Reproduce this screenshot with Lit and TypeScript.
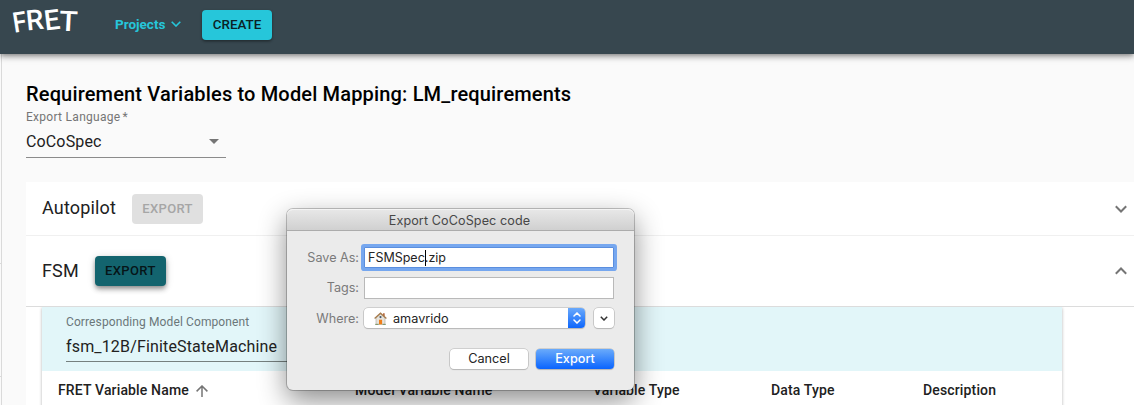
import { LitElement, html, css, svg } from "lit";
import { customElement, property } from "lit/decorators.js";

const COLUMNS = ["FRET Variable Name", "Model Variable Name", "Variable Type", "Data Type", "Description"];

const chevron = (d: string) => svg`<path d=${d} fill="none" stroke="currentColor" />`;

@customElement("app-header")
class AppHeader extends LitElement {
  static styles = css`
    :host {
      display: flex;
      align-items: flex-start;
      height: 54px;
      background: #37474f;
      box-shadow: 0 2px 4px -1px rgba(0, 0, 0, 0.3), 0 4px 5px rgba(0, 0, 0, 0.16), 0 1px 10px rgba(0, 0, 0, 0.14);
      z-index: 1;
      font-family: Roboto, sans-serif;
    }
    .logo {
      display: flex;
      width: 102px;
      padding-left: 12px;
      box-sizing: border-box;
      color: #fff;
      font: 500 28px/42px Roboto, sans-serif;
    }
    .logo span { display: block; width: 17px; }
    .logo span:nth-child(1) { transform: translateY(2px) rotate(-9deg) scaleX(0.9); width: 13.5px; }
    .logo span:nth-child(2) { transform: translateY(-0.5px) rotate(-6deg); width: 18px; }
    .logo span:nth-child(3) { transform: translateY(-0.5px) rotate(-7deg); width: 16.5px; }
    .logo span:nth-child(4) { transform: translateY(1px) rotate(3deg) scaleX(1.08); }
    .projects {
      display: flex;
      align-items: center;
      gap: 6px;
      width: 87px;
      height: 48px;
      padding-left: 13px;
      box-sizing: border-box;
      color: #26c6da;
      font-size: 13.5px;
      font-weight: 700;
    }
    .create {
      margin-top: 10px;
      width: 70px;
      height: 30px;
      border-radius: 4px;
      background: #26c6da;
      box-shadow: 0 1px 3px rgba(0, 0, 0, 0.3), 0 2px 2px rgba(0, 0, 0, 0.14);
      color: #0b2226;
      font-size: 13.4px;
      font-weight: 500;
      line-height: 29px;
      text-align: center;
    }
    .gap { width: 13px; }
  `;
  render() {
    return html`
      <div class="logo"><span>F</span><span>R</span><span>E</span><span>T</span></div>
      <div class="projects">
        <span>Projects</span>
        <svg width="10" height="6" viewBox="0 0 10 6" stroke-width="1.6">${chevron("M.7 .7 5 5 9.3 .7")}</svg>
      </div>
      <div class="gap"></div>
      <div class="create">CREATE</div>
    `;
  }
}

@customElement("component-panel")
class ComponentPanel extends LitElement {
  @property() name = "";
  @property({ type: Boolean }) open = false;
  static styles = css`
    :host { display: block; background: #fff; font-family: Roboto, sans-serif; }
    .bar {
      display: flex;
      align-items: center;
      height: 53px;
      padding: 0 7px 0 16px;
      border-bottom: 1px solid #f0f0f0;
      color: #212121;
    }
    .bar.open { height: 70px; border-color: #dcdcdc; }
    .name { padding-bottom: 2px; font-size: 18px; letter-spacing: 0.17px; }
    .export {
      width: 71px;
      height: 30px;
      margin-left: 16px;
      border-radius: 4px;
      background: #e0e0e0;
      color: #a6a6a6;
      font-size: 13px;
      font-weight: 500;
      letter-spacing: 0.35px;
      line-height: 29px;
      text-align: center;
    }
    .open .export {
      background: #13646e;
      color: #061518;
      box-shadow: 0 2px 4px -1px rgba(0, 0, 0, 0.3), 0 4px 5px rgba(0, 0, 0, 0.2), 0 1px 8px rgba(0, 0, 0, 0.14);
    }
    svg { margin-left: auto; color: #757575; }
  `;
  render() {
    return html`
      <div class="bar ${this.open ? "open" : ""}">
        <span class="name">${this.name}</span>
        <div class="export">EXPORT</div>
        <svg width="12" height="8" viewBox="0 0 12 8" stroke-width="2">
          ${chevron(this.open ? "M.8 6.7 6 1.5 11.2 6.7" : "M.8 1.3 6 6.5 11.2 1.3")}
        </svg>
      </div>
      <slot></slot>
    `;
  }
}

@customElement("variables-table")
class VariablesTable extends LitElement {
  static styles = css`
    :host {
      display: block;
      width: 1020px;
      height: 110px;
      margin-left: 16px;
      background: #fff;
      box-shadow: 0 1px 3px rgba(0, 0, 0, 0.3);
      clip-path: inset(0 -4px -4px -4px);
      font-family: Roboto, sans-serif;
      color: #212121;
    }
    .band { height: 64px; padding: 8px 24px 0; box-sizing: border-box; background: #e2f6f9; }
    .label { color: #6b7779; font-size: 12px; line-height: 14px; letter-spacing: 0.11px; }
    .value {
      width: 260px;
      height: 32px;
      border-bottom: 1px solid #75807f;
      font-size: 16px;
      line-height: 35px;
      letter-spacing: 0.16px;
    }
    .head {
      display: grid;
      grid-template-columns: 297px 238px 178px 152px 1fr;
      padding-left: 16px;
      font-size: 14px;
      font-weight: 500;
      letter-spacing: 0.15px;
      line-height: 39px;
      white-space: nowrap;
    }
    .head div { display: flex; align-items: center; gap: 7px; }
    svg { color: #757575; }
  `;
  render() {
    return html`
      <div class="band">
        <div class="label">Corresponding Model Component</div>
        <div class="value">fsm_12B/FiniteStateMachine</div>
      </div>
      <div class="head">
        ${COLUMNS.map(
          (c, i) => html`<div>
            <span>${c}</span>
            ${i === 0
              ? html`<svg width="12" height="12" viewBox="0 0 12 12" stroke-width="1.5">${chevron("M6 12V1M.6 6.4 6 1 11.4 6.4")}</svg>`
              : ""}
          </div>`
        )}
      </div>
    `;
  }
}

@customElement("save-dialog")
class SaveDialog extends LitElement {
  static styles = css`
    :host {
      display: block;
      width: 347px;
      height: 181px;
      border-radius: 6px;
      background: #ebebeb;
      box-shadow: 0 0 0 1px rgba(0, 0, 0, 0.22), 0 10px 28px rgba(0, 0, 0, 0.46);
      font-family: Inter, sans-serif;
      font-size: 13px;
      color: #242424;
    }
    .title {
      height: 21px;
      padding-right: 2px;
      border-bottom: 1px solid #acacac;
      border-radius: 6px 6px 0 0;
      background: linear-gradient(#e8e8e8, #d0d0d0);
      box-shadow: inset 0 1px #f4f4f4;
      color: #474747;
      text-align: center;
      line-height: 23px;
      font-size: 12.6px;
      letter-spacing: 0.1px;
    }
    .form {
      display: grid;
      grid-template-columns: 72px 250px;
      grid-template-rows: 21px 22px 21px;
      column-gap: 5px;
      row-gap: 9px;
      padding-top: 16px;
    }
    .label { color: #7a7a7a; text-align: right; line-height: 22px; font-size: 12.6px; }
    .input { box-sizing: border-box; border: 1px solid #b9b9b9; background: #fff; padding-left: 3px; line-height: 20px; }
    .input.focus { display: flex; align-items: center; border-color: #5a8ede; box-shadow: 0 0 0 3px #76a7ef; border-radius: 1px; font-size: 12.5px; }
    .caret { width: 1px; height: 16px; margin-right: -1px; background: #000; }
    .row { display: flex; justify-content: space-between; }
    .select, .more, .btn {
      border-radius: 4px;
      background: #fff;
      box-shadow: 0 0 0 0.6px #b4b4b4, 0 1px 1px rgba(0, 0, 0, 0.2);
    }
    .select { display: flex; align-items: center; width: 221px; height: 20px; font-size: 12.7px; }
    .home { margin: 1px 6px 0 10px; }
    .stepper {
      display: flex;
      align-items: center;
      justify-content: center;
      width: 17px;
      height: 20.5px;
      margin-left: auto;
      border-radius: 0 4px 4px 0;
      background: linear-gradient(#6aa9fb, #0d66fc);
      color: #fff;
    }
    .more { display: flex; align-items: center; justify-content: center; width: 20px; height: 20px; color: #333; }
    .actions { display: flex; justify-content: flex-end; gap: 8px; padding: 20px 20px 0 0; }
    .btn { width: 78px; height: 20px; line-height: 20px; text-align: center; font-size: 12.7px; }
    .btn.primary { background: linear-gradient(#6aabfb, #0a64fe); color: #fff; font-weight: 500; }
  `;
  render() {
    return html`
      <div class="title">Export CoCoSpec code</div>
      <div class="form">
        <div class="label">Save As:</div>
        <div class="input focus"><span>FSMSpec</span><i class="caret"></i><span>.zip</span></div>
        <div class="label">Tags:</div>
        <div class="input"></div>
        <div class="label">Where:</div>
        <div class="row">
          <div class="select">
            <svg class="home" width="13" height="13" viewBox="0 0 13 13">
              <path d="M2 6 6.5 2 11 6V12.3H2Z" fill="#e6e3dc" stroke="#aaa69d" stroke-width=".6" />
              <path d="M9 1.2H10.7V4H9Z" fill="#b86b43" />
              <path d="M.6 6.6 6.5 1.2 12.4 6.6" fill="none" stroke="#a77b4b" stroke-width="1.3" />
              <circle cx="6.5" cy="5.1" r="1.1" fill="#45596e" />
              <path d="M5 7.7H8.1V12.4H5Z" fill="#ef7e18" />
              <path d="M1.2 12.4H4.6M8.5 12.4H11.8" stroke="#7c9464" stroke-width="1" />
            </svg>
            <span>amavrido</span>
            <div class="stepper">
              <svg width="8" height="12" viewBox="0 0 8 12" stroke-width="1.5" stroke-linecap="round">
                ${chevron("M1 4 4 1 7 4M1 8 4 11 7 8")}
              </svg>
            </div>
          </div>
          <div class="more">
            <svg width="8" height="5" viewBox="0 0 8 5" stroke-width="1.5">${chevron("M.8 .8 4 4 7.2 .8")}</svg>
          </div>
        </div>
      </div>
      <div class="actions">
        <div class="btn">Cancel</div>
        <div class="btn primary">Export</div>
      </div>
    `;
  }
}

@customElement("app-root")
class AppRoot extends LitElement {
  static styles = css`
    :host {
      display: flex;
      flex-direction: column;
      position: relative;
      width: 1134px;
      height: 405px;
      overflow: hidden;
      background: #fafafa;
      font-family: Roboto, sans-serif;
    }
    .body { display: flex; flex: 1; min-height: 0; }
    .rail { flex: none; width: 1px; height: 351px; border-right: 1px solid #dadada; }
    .rail div { box-sizing: border-box; border-bottom: 1px solid #dadada; }
    .rail .first { height: 210px; }
    .rail .second { height: 113px; }
    main { flex: 1; padding: 28px 0 0 24px; }
    h1 { margin: 0; font-size: 20px; font-weight: 500; line-height: 24px; letter-spacing: 0.165px; color: #000; }
    .label { margin-top: 4px; color: #757575; font-size: 12px; line-height: 14px; letter-spacing: 0.28px; }
    .select {
      display: flex;
      align-items: center;
      justify-content: space-between;
      box-sizing: border-box;
      width: 200px;
      height: 34px;
      padding: 2px 7px 0 0;
      border-bottom: 1px solid #8b8b8b;
      color: #212121;
      font-size: 16px;
      letter-spacing: 0.14px;
    }
    .panels { margin-top: 24px; }
    .star { margin-left: 2px; }
    save-dialog { position: absolute; left: 287px; top: 209px; z-index: 2; }
  `;
  render() {
    return html`
      <app-header></app-header>
      <div class="body">
        <div class="rail"><div class="first"></div><div class="second"></div></div>
        <main>
          <h1>Requirement Variables to Model Mapping: LM_requirements</h1>
          <div class="label">Export Language<span class="star">*</span></div>
          <div class="select">
            <span>CoCoSpec</span>
            <svg width="10" height="5" viewBox="0 0 10 5"><path d="M0 0H10L5 5Z" fill="#757575" /></svg>
          </div>
          <div class="panels">
            <component-panel name="Autopilot"></component-panel>
            <component-panel name="FSM" open><variables-table></variables-table></component-panel>
          </div>
        </main>
      </div>
      <save-dialog></save-dialog>
    `;
  }
}
